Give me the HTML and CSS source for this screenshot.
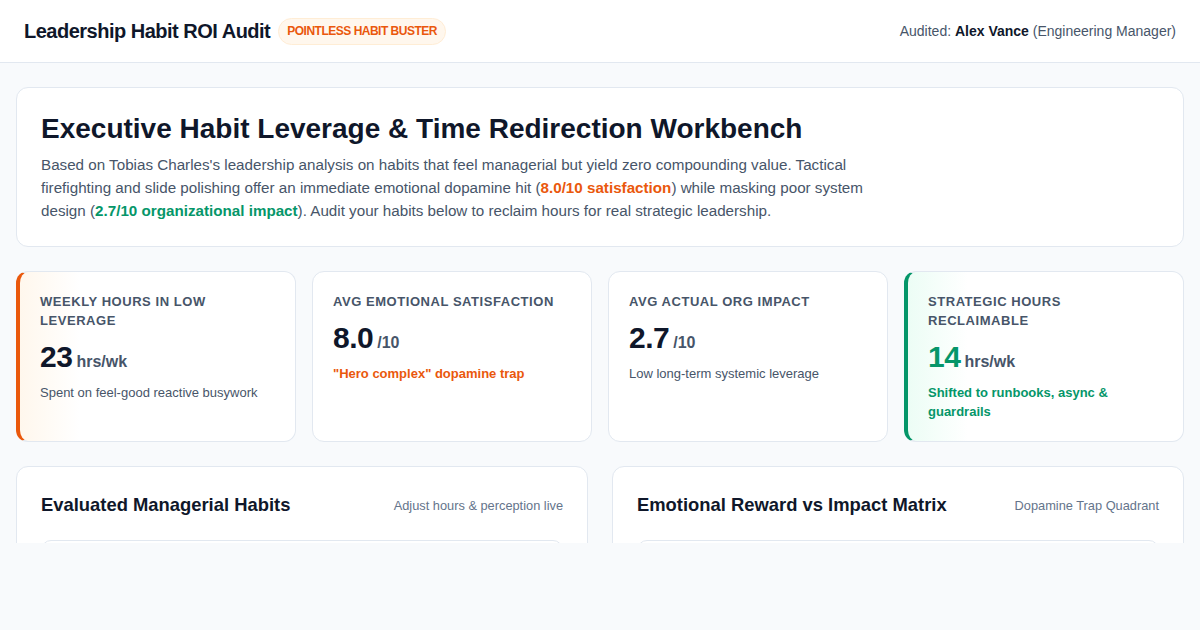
FILE: index.html
```html
<!DOCTYPE html>
<html lang="en">
<head>
<meta charset="utf-8">
<title>Leadership Habit ROI Audit</title>
<link rel="stylesheet" href="styles.css">
</head>
<body>
<header class="topbar">
  <div class="brand">
    <h1 class="brand-title">Leadership Habit ROI Audit</h1>
    <span class="badge">POINTLESS HABIT BUSTER</span>
  </div>
  <div class="audited">Audited: <strong>Alex Vance</strong> (Engineering Manager)</div>
</header>
<main class="main">
  <section class="card hero">
    <h2 class="hero-title">Executive Habit Leverage &amp; Time Redirection Workbench</h2>
    <p class="hero-text">Based on Tobias Charles's leadership analysis on habits that feel managerial but yield zero compounding value. Tactical firefighting and slide polishing offer an immediate emotional dopamine hit (<b class="orange">8.0/10 satisfaction</b>) while masking poor system design (<b class="green">2.7/10 organizational impact</b>). Audit your habits below to reclaim hours for real strategic leadership.</p>
  </section>
  <section class="stats">
    <div class="stat stat-orange">
      <div class="stat-label">Weekly Hours in Low Leverage</div>
      <div class="stat-value"><span class="num">23</span><span class="unit">hrs/wk</span></div>
      <div class="stat-sub">Spent on feel-good reactive busywork</div>
    </div>
    <div class="stat">
      <div class="stat-label">Avg Emotional Satisfaction</div>
      <div class="stat-value"><span class="num">8.0</span><span class="unit">/10</span></div>
      <div class="stat-sub strong orange">"Hero complex" dopamine trap</div>
    </div>
    <div class="stat">
      <div class="stat-label">Avg Actual Org Impact</div>
      <div class="stat-value"><span class="num">2.7</span><span class="unit">/10</span></div>
      <div class="stat-sub">Low long-term systemic leverage</div>
    </div>
    <div class="stat stat-green">
      <div class="stat-label">Strategic Hours Reclaimable</div>
      <div class="stat-value"><span class="num green">14</span><span class="unit">hrs/wk</span></div>
      <div class="stat-sub strong green">Shifted to runbooks, async &amp; guardrails</div>
    </div>
  </section>
  <section class="panels">
    <div class="card panel">
      <div class="panel-head">
        <h3 class="panel-title">Evaluated Managerial Habits</h3>
        <span class="panel-note">Adjust hours &amp; perception live</span>
      </div>
      <div class="panel-body"></div>
    </div>
    <div class="card panel">
      <div class="panel-head">
        <h3 class="panel-title">Emotional Reward vs Impact Matrix</h3>
        <span class="panel-note">Dopamine Trap Quadrant</span>
      </div>
      <div class="panel-body"></div>
    </div>
  </section>
</main>
</body>
</html>
```
FILE: styles.css
```css
* { box-sizing: border-box; }
html, body { margin: 0; padding: 0; }
body {
  font-family: "Liberation Sans", Arial, sans-serif;
  background: #f8fafc;
  color: #0f172a;
  height: 630px;
  overflow: hidden;
}
.topbar {
  height: 63px;
  background: #ffffff;
  border-bottom: 1px solid #e2e8f0;
  display: flex;
  align-items: center;
  justify-content: space-between;
  padding: 0 24px;
}
.brand { display: flex; align-items: center; gap: 8px; }
.brand-title {
  margin: 0;
  font-size: 20px;
  font-weight: 700;
  letter-spacing: -0.5px;
  color: #0f172a;
}
.badge {
  display: inline-block;
  background: #fff7ed;
  border: 1px solid #ffedd5;
  color: #ea580c;
  font-size: 12px;
  font-weight: 700;
  letter-spacing: -0.5px;
  padding: 6px 8px;
  border-radius: 999px;
  line-height: 13px;
}
.audited { font-size: 14px; color: #475569; }
.audited strong { color: #0f172a; }
.main {
  height: 480px;
  overflow: hidden;
  padding: 24px 16px 0;
  display: flex;
  flex-direction: column;
  gap: 24px;
}
.card {
  background: #ffffff;
  border: 1px solid #e2e8f0;
  border-radius: 12px;
}
.hero { padding: 24px 24px 24px; }
.hero-title {
  margin: 0 0 7px;
  font-size: 28px;
  font-weight: 700;
  line-height: 34px;
  color: #0f172a;
}
.hero-text {
  margin: 0;
  max-width: 860px;
  font-size: 15.2px;
  line-height: 23px;
  color: #475569;
}
.orange { color: #ea580c; }
.green { color: #059669; }
.stats {
  display: grid;
  grid-template-columns: repeat(4, 1fr);
  gap: 16px;
}
.stat {
  background: #ffffff;
  border: 1px solid #e2e8f0;
  border-radius: 12px;
  padding: 20px;
  height: 171px;
}
.stat-orange {
  border-left: 4px solid #ea580c;
  background: linear-gradient(90deg, #fff7ed 0px, #ffffff 60px);
}
.stat-green {
  border-left: 4px solid #059669;
  background: linear-gradient(90deg, #ecfdf5 0px, #ffffff 60px);
}
.stat-label {
  font-size: 13px;
  font-weight: 700;
  letter-spacing: 0.55px;
  line-height: 19px;
  text-transform: uppercase;
  color: #475569;
}
.stat-value {
  margin-top: 10px;
  display: flex;
  align-items: baseline;
  gap: 4px;
  line-height: 34px;
}
.num { font-size: 30px; font-weight: 700; color: #0f172a; letter-spacing: -0.5px; }
.num.green { color: #059669; }
.unit { font-size: 16px; font-weight: 700; color: #475569; }
.stat-sub {
  margin-top: 4px;
  font-size: 13px;
  line-height: 19px;
  color: #475569;
}
.stat-sub.strong { font-weight: 700; }
.stat-sub.orange { color: #ea580c; }
.stat-sub.green { color: #059669; }
.panels {
  display: grid;
  grid-template-columns: 1fr 1fr;
  gap: 24px;
}
.panel { padding: 24px 24px; height: 300px; }
.panel-head {
  display: flex;
  align-items: center;
  justify-content: space-between;
  height: 28px;
}
.panel-title { margin: 0; font-size: 18.4px; font-weight: 700; color: #0f172a; }
.panel-note { font-size: 12.8px; color: #64748b; }
.panel-body {
  margin-top: 21px;
  height: 200px;
  border: 1px solid #e2e8f0;
  border-radius: 10px;
}
```
